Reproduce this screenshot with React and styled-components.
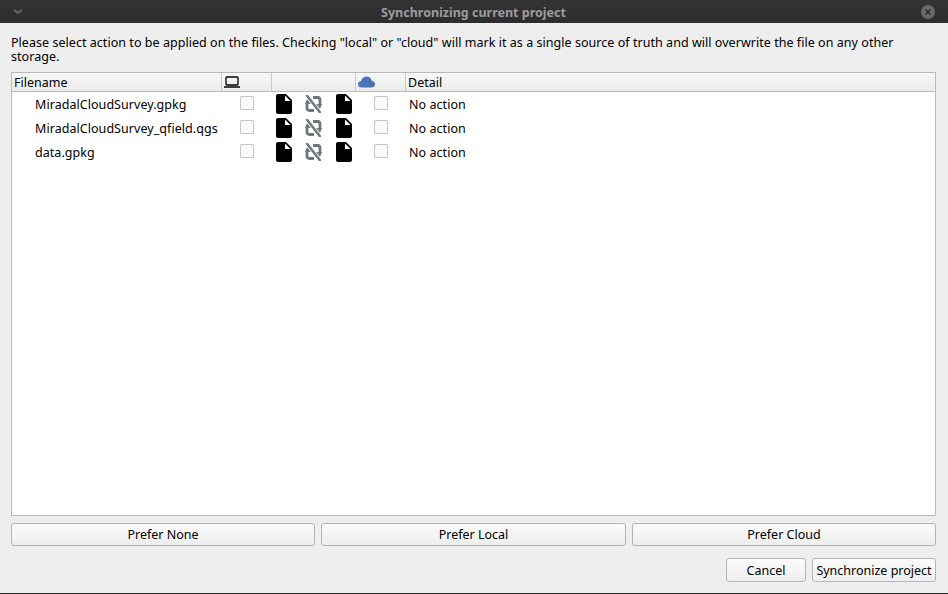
import React from 'react';
import styled, { createGlobalStyle } from 'styled-components';

const Global = createGlobalStyle`
  html, body { margin: 0; padding: 0; background: #eeeeee; }
  body { font-family: "Noto Sans", "DejaVu Sans", sans-serif; font-size: 12.5px; color: #000; }
`;

const Window = styled.div`
  width: 948px;
  height: 594px;
  display: flex;
  flex-direction: column;
  background: #eeeeee;
  border-bottom: 1px solid #2c2c2c;
  box-sizing: border-box;
  overflow: hidden;
`;

const TitleBar = styled.div`
  height: 23px;
  flex: none;
  display: flex;
  align-items: center;
  justify-content: space-between;
  padding: 0 13px 0 13px;
  background: linear-gradient(#333333, #2d2d2d);
`;

const Title = styled.div`
  flex: 1;
  padding: 2px 0 0 3px;
  text-align: center;
  font-weight: 700;
  font-size: 12.5px;
  color: #9c9c9c;
`;

const Content = styled.div`
  flex: 1;
  display: flex;
  flex-direction: column;
  padding: 13px 12px 11px 11px;
  min-height: 0;
`;

const Intro = styled.p`
  margin: 0 0 6px;
  height: 30px;
  line-height: 14px;
  font-size: 12.5px;
  letter-spacing: 0.04px;
`;

const Table = styled.div`
  flex: 1;
  min-height: 0;
  background: #fff;
  border: 1px solid #b9b9b9;
`;

const columns = '210px 50px 84px 50px 1fr';

const HeaderRow = styled.div`
  display: grid;
  grid-template-columns: ${columns};
  height: 18px;
  background: linear-gradient(#f7f7f7, #ebebeb);
  border-bottom: 1px solid #b9b9b9;
`;

const HeaderCell = styled.div`
  display: flex;
  align-items: center;
  padding-left: 2px;
  font-size: 12.5px;
  border-right: 1px solid #c9c9c9;
  &:last-child { border-right: 0; }
`;

const Row = styled.div`
  display: grid;
  grid-template-columns: ${columns};
  height: 24px;
  align-items: center;
`;

const Name = styled.div`
  padding-left: 23px;
  font-size: 12.5px;
  letter-spacing: 0.05px;
`;

const Center = styled.div`
  display: flex;
  justify-content: center;
  padding-bottom: 2px;
`;

const Box = styled.span`
  display: block;
  width: 12px;
  height: 12px;
  border: 1px solid #c4c4c4;
  border-radius: 1px;
  background: #fafafa;
`;

const SyncCell = styled.div`
  display: flex;
  align-items: center;
  padding-left: 4px;
  svg:nth-child(2) { margin: 0 14px 0 13px; }
`;

const Detail = styled.div`
  padding-left: 3px;
  font-size: 12.5px;
  letter-spacing: 0.05px;
`;

const PreferRow = styled.div`
  display: grid;
  grid-template-columns: 304px 305px 304px;
  gap: 6px;
  margin-top: 7px;
`;

const Button = styled.button`
  height: ${(p) => (p.$short ? 24 : 23)}px;
  padding: 0;
  border: 1px solid #b4b4b4;
  border-radius: 3px;
  background: linear-gradient(#fbfbfb, #eeeeee);
  font-family: inherit;
  font-size: 12.5px;
  color: #000;
  width: ${(p) => p.$width || 'auto'};
`;

const ActionRow = styled.div`
  display: flex;
  justify-content: flex-end;
  gap: 6px;
  margin-top: 12px;
`;

const FileIcon = () => (
  <svg width="16" height="20" viewBox="4 2 16 20">
    <path d="M6 2c-1.100 0-2 .9-2 2v16c0 1.100.9 2 2 2h12c1.100 0 2-.9 2-2V8l-6-6H6zm7 7V3.500L18.500 9H13z" fill="#000" />
  </svg>
);

const SyncOff = () => (
  <svg width="17" height="18" viewBox="0 0 17 18" fill="none" stroke="#6f767c">
    <path d="M8 2.500H12.500Q15 2.500 15 5V10" strokeWidth="2.800" />
    <path d="M11 9H17L15 14Z" fill="#6f767c" stroke="none" />
    <path d="M9 15.500H4.500Q2 15.500 2 13V8" strokeWidth="2.800" />
    <path d="M0 9H6L2 4Z" fill="#6f767c" stroke="none" />
    <path d="M1.500 0L15.500 18" stroke="#fff" strokeWidth="3.800" />
    <path d="M1.500 0L15.500 18" strokeWidth="2.400" />
  </svg>
);

const Laptop = () => (
  <svg width="16" height="12" viewBox="0 0 16 12" fill="none">
    <rect x="2" y="1" width="12" height="8" rx="1" stroke="#000" strokeWidth="1.300" />
    <path d="M0 11H16" stroke="#000" strokeWidth="1.500" />
  </svg>
);

const Cloud = () => (
  <svg width="17" height="12" viewBox="0 0 17 12">
    <path d="M4 11.500Q0 11.500 0 8Q0 5.500 3 5Q4.500 0.500 8.500 0.500Q12.500 0.500 13.500 4.500Q17 5.500 17 8Q17 11.500 13 11.500Z" fill="#4a74b4" />
  </svg>
);

const files = ['MiradalCloudSurvey.gpkg', 'MiradalCloudSurvey_qfield.qgs', 'data.gpkg'];

const App = () => (
  <Window>
    <Global />
    <TitleBar>
      <svg width="10" height="6" viewBox="0 0 10 6" fill="none">
        <path d="M1 1L5 4L9 1" stroke="#6c6c6c" strokeWidth="1.600" />
      </svg>
      <Title>Synchronizing current project</Title>
      <svg width="14" height="14" viewBox="0 0 14 14">
        <circle cx="7" cy="7" r="7" fill="#6a6a6a" />
        <path d="M4.500 4.500L9.500 9.500M9.500 4.500L4.500 9.500" stroke="#2f2f2f" strokeWidth="1.600" />
      </svg>
    </TitleBar>
    <Content>
      <Intro>
        Please select action to be applied on the files. Checking "local" or "cloud" will mark it as a single source of truth and will overwrite the file on any other storage.
      </Intro>
      <Table>
        <HeaderRow>
          <HeaderCell>Filename</HeaderCell>
          <HeaderCell><Laptop /></HeaderCell>
          <HeaderCell />
          <HeaderCell><Cloud /></HeaderCell>
          <HeaderCell>Detail</HeaderCell>
        </HeaderRow>
        {files.map((file) => (
          <Row key={file}>
            <Name>{file}</Name>
            <Center><Box /></Center>
            <SyncCell>
              <FileIcon />
              <SyncOff />
              <FileIcon />
            </SyncCell>
            <Center><Box /></Center>
            <Detail>No action</Detail>
          </Row>
        ))}
      </Table>
      <PreferRow>
        <Button>Prefer None</Button>
        <Button>Prefer Local</Button>
        <Button>Prefer Cloud</Button>
      </PreferRow>
      <ActionRow>
        <Button $short $width="80px">Cancel</Button>
        <Button $short $width="124px">Synchronize project</Button>
      </ActionRow>
    </Content>
  </Window>
);

export default App;
